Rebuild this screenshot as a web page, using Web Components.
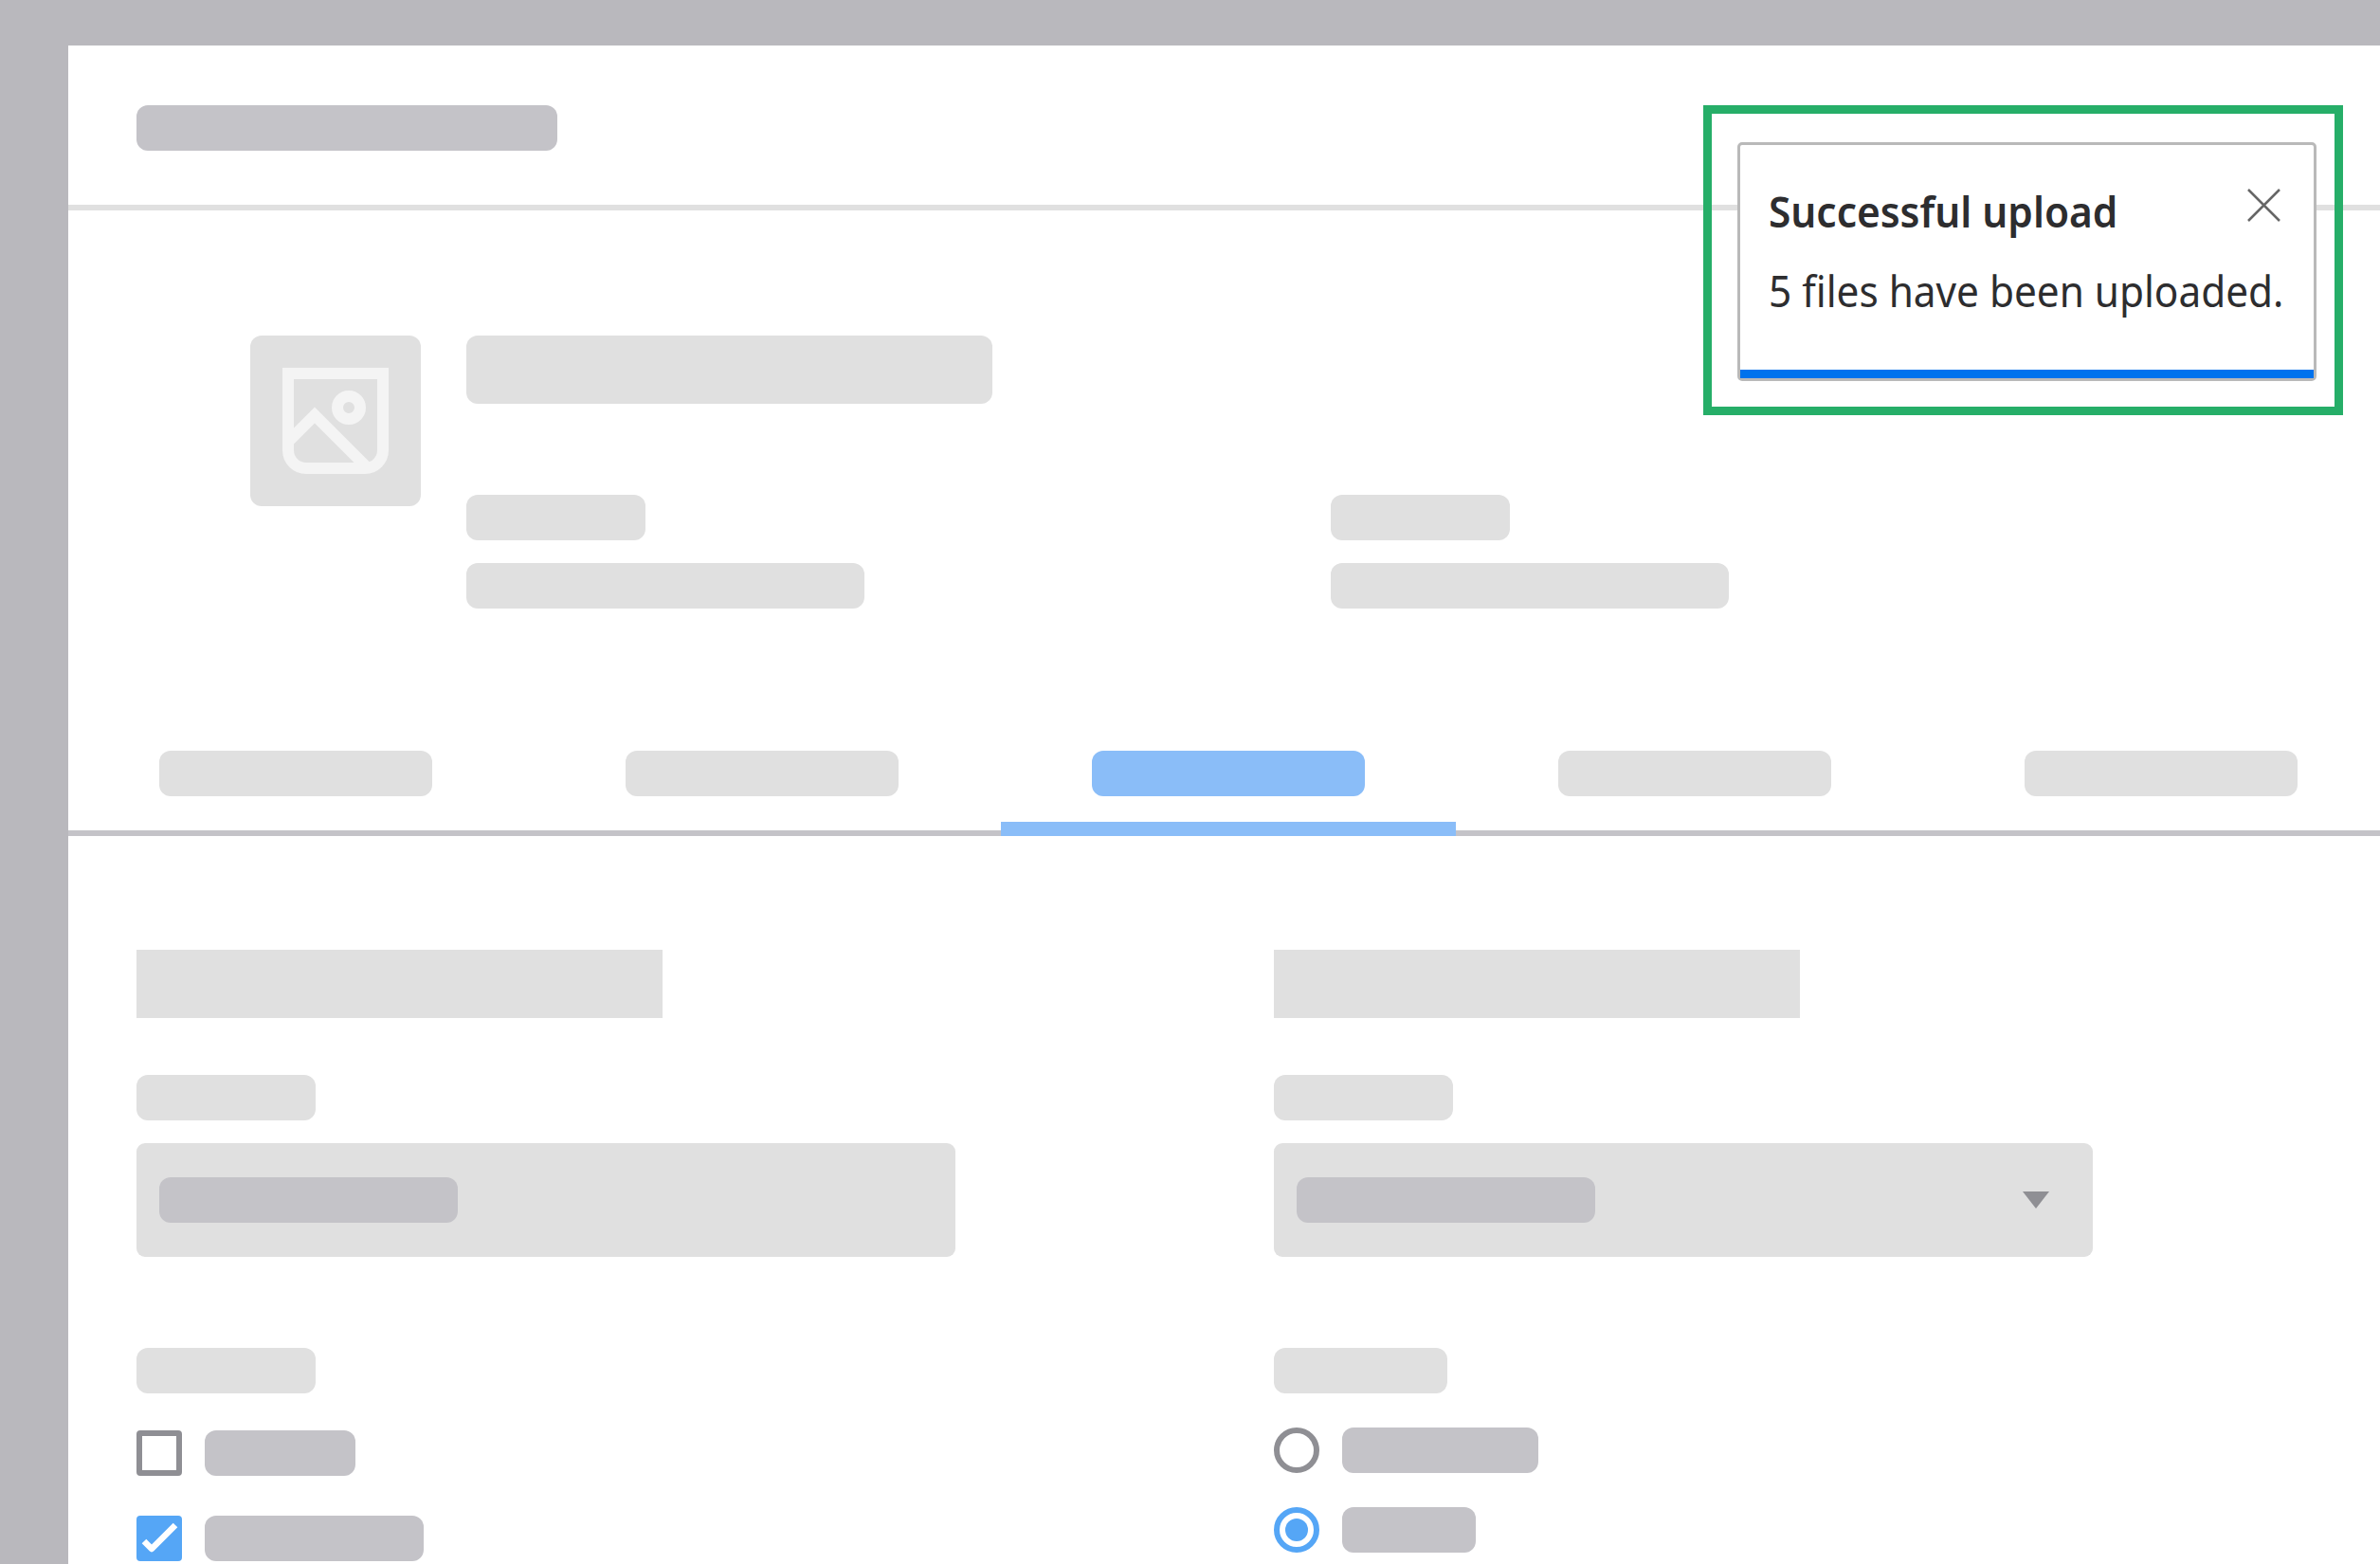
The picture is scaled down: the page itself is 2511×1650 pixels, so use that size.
<!DOCTYPE html>
<html><head><meta charset="utf-8"><title>Upload toast</title>
<style>
html,body{margin:0;padding:0;background:#b9b8bd;width:2511px;height:1650px;overflow:hidden}
app-shell{--light:#e0e0e0;--mid:#c4c3c8;--dark:#8f8f94;--blue:#55a6f6;--tab:#8abdf8}
</style></head><body>
<app-shell>
  <page-header slot="header"></page-header>
  <upload-toast slot="toast" heading="Successful upload">5 files have been uploaded.</upload-toast>
  <summary-block slot="summary"></summary-block>
  <tab-row slot="tabs"></tab-row>
  <form-grid slot="form"></form-grid>
</app-shell>
<script>
const def=(name,css,html)=>customElements.define(name,class extends HTMLElement{
  constructor(){super();const s=this.attachShadow({mode:'open'});
    const h=typeof html==='function'?html(this):html;
    s.innerHTML=`<style>${css}</style>${h}`;}
});
customElements.define('sk-bar',class extends HTMLElement{
  connectedCallback(){
    if(this.shadowRoot)return;
    const s=this.attachShadow({mode:'open'});
    s.innerHTML=`<style>:host{display:block;flex:none;width:${this.getAttribute('w')}px;height:${this.getAttribute('h')||48}px;background:${this.getAttribute('c')||'var(--light)'};border-radius:${this.getAttribute('r')||12}px}</style>`;
  }
});
def('app-shell',`
  :host{display:block;padding:48px 0 0 72px;height:1650px;box-sizing:border-box}
  main{position:relative;background:#fff;height:1602px;overflow:hidden}
`,`<main><slot name="header"></slot><slot name="summary"></slot><slot name="tabs"></slot><slot name="form"></slot><slot name="toast"></slot></main>`);
def('page-header',`
  :host{display:block;height:174px;box-sizing:border-box;padding:63px 0 0 72px;border-bottom:6px solid var(--light)}
`,`<sk-bar w="444" c="var(--mid)"></sk-bar>`);
def('upload-toast',`
  :host{position:absolute;left:1725px;top:63px;width:675px;height:327px;box-sizing:border-box;border:9px solid #26ae68;padding:30px 19px 0 27px;display:block}
  .card{box-sizing:border-box;width:611px;height:252px;background:#fff;border:3px solid #b9b9b9;border-radius:5px;display:flex;flex-direction:column;color:#2d2d2f;font-family:"Noto Sans","Open Sans",sans-serif}
  .body{flex:1;padding:0 0 0 30px}
  .top{display:flex;justify-content:space-between;align-items:flex-start;padding:46px 35px 0 0;height:83px;box-sizing:content-box}
  .t{font-weight:600;font-size:45px;line-height:64px;margin-top:-8px;white-space:nowrap;transform:scaleX(.942);transform-origin:0 50%}
  svg{display:block;flex:none}
  .m{font-size:45px;line-height:64px;margin-top:-7px;white-space:nowrap;transform:scaleX(.94);transform-origin:0 50%}
  .bar{height:9px;background:#0072ed}
`,el=>`<div class="card"><div class="body"><div class="top"><div class="t">${el.getAttribute('heading')}</div><svg width="35" height="35" viewBox="0 0 35 35"><path d="M1 1L34 34M34 1L1 34" stroke="#666" stroke-width="2.5" fill="none"/></svg></div><div class="m"><slot></slot></div></div><div class="bar"></div></div>`);
def('summary-block',`
  :host{display:flex;padding:132px 0 0 192px;gap:48px}
  .thumb{width:180px;height:180px;border-radius:12px;background:var(--light);flex:none}
  svg{display:block}
  .right{display:flex;flex-direction:column;align-items:flex-start}
  .cols{display:grid;grid-template-columns:912px 420px;margin-top:96px}
  .c{display:flex;flex-direction:column;gap:24px}
`,`<div class="thumb"><svg width="180" height="180" viewBox="0 0 180 180" fill="none" stroke="#f4f4f4" stroke-width="12"><path d="M40 40H140V121a19 19 0 0 1-19 19H59a19 19 0 0 1-19-19Z"/><circle cx="104" cy="76" r="12"/><path d="M40 112L68 84L124 140"/></svg></div>
<div class="right"><sk-bar w="555" h="72"></sk-bar><div class="cols"><div class="c"><sk-bar w="189"></sk-bar><sk-bar w="420"></sk-bar></div><div class="c"><sk-bar w="189"></sk-bar><sk-bar w="420"></sk-bar></div></div></div>`);
def('tab-row',`
  :host{display:flex;gap:12px;padding-top:150px;border-bottom:6px solid var(--mid)}
  .tab{flex:none;width:480px;height:90px;margin-bottom:-6px;box-sizing:border-box;border-bottom:15px solid transparent;display:flex;justify-content:center;z-index:1}
  .tab.on{border-bottom-color:var(--tab)}
`,[0,1,2,3,4].map(i=>`<div class="tab ${i==2?'on':''}"><sk-bar w="288" c="${i==2?'var(--tab)':'var(--light)'}"></sk-bar></div>`).join(''));
def('select-box',`
  :host{display:flex;align-items:center;justify-content:space-between;width:864px;height:120px;box-sizing:border-box;padding:0 46px 0 24px;background:var(--light);border-radius:9px}
  svg{display:block}
`,el=>`<sk-bar w="315" c="var(--mid)"></sk-bar>`+(el.hasAttribute('arrow')?`<svg width="28" height="18" viewBox="0 0 28 18"><path d="M0 0H28L14 18Z" fill="#8f8f94"/></svg>`:''));
def('check-row',`
  :host{display:flex;gap:24px}
  .b{box-sizing:border-box;width:48px;height:48px;border:6px solid var(--dark);border-radius:4px;flex:none}
  .b.on{border:0;background:var(--blue)}
  .r{border-radius:50%}
  .r.on{border:6px solid var(--blue);background:#fff;display:flex;align-items:center;justify-content:center}
  .r.on::after{content:"";width:24px;height:24px;border-radius:50%;background:var(--blue)}
  svg{display:block}
`,el=>{const on=el.hasAttribute('on'),rd=el.hasAttribute('radio');
  const cls=`b ${rd?'r':''} ${on?'on':''}`;
  const ck=on&&!rd?`<svg width="48" height="48" viewBox="0 0 48 48"><path d="M8 27L16 35L41 10" stroke="#fff" stroke-width="6.5" fill="none" stroke-linejoin="round"/></svg>`:'';
  return `<div class="${cls}">${ck}</div><sk-bar w="${el.getAttribute('w')}" c="var(--mid)"></sk-bar>`;});
def('form-grid',`
  :host{display:grid;grid-template-columns:1200px 1200px;padding:120px 0 0 72px}
  .c{display:flex;flex-direction:column;align-items:flex-start}
  .l{margin-top:60px}.i{margin-top:24px}.l2{margin-top:96px}
  .o1{margin-top:39px}.o2{margin-top:42px}
  .r1{margin-top:36px}.r2{margin-top:36px}
`,`<div class="c"><sk-bar w="555" h="72" r="0"></sk-bar><sk-bar class="l" w="189"></sk-bar><select-box class="i"></select-box><sk-bar class="l2" w="189"></sk-bar><check-row class="o1" w="159"></check-row><check-row class="o2" w="231" on></check-row></div>
<div class="c"><sk-bar w="555" h="72" r="0"></sk-bar><sk-bar class="l" w="189"></sk-bar><select-box class="i" arrow></select-box><sk-bar class="l2" w="183"></sk-bar><check-row class="r1" radio w="207"></check-row><check-row class="r2" radio on w="141"></check-row></div>`);
</script>
</body></html>
